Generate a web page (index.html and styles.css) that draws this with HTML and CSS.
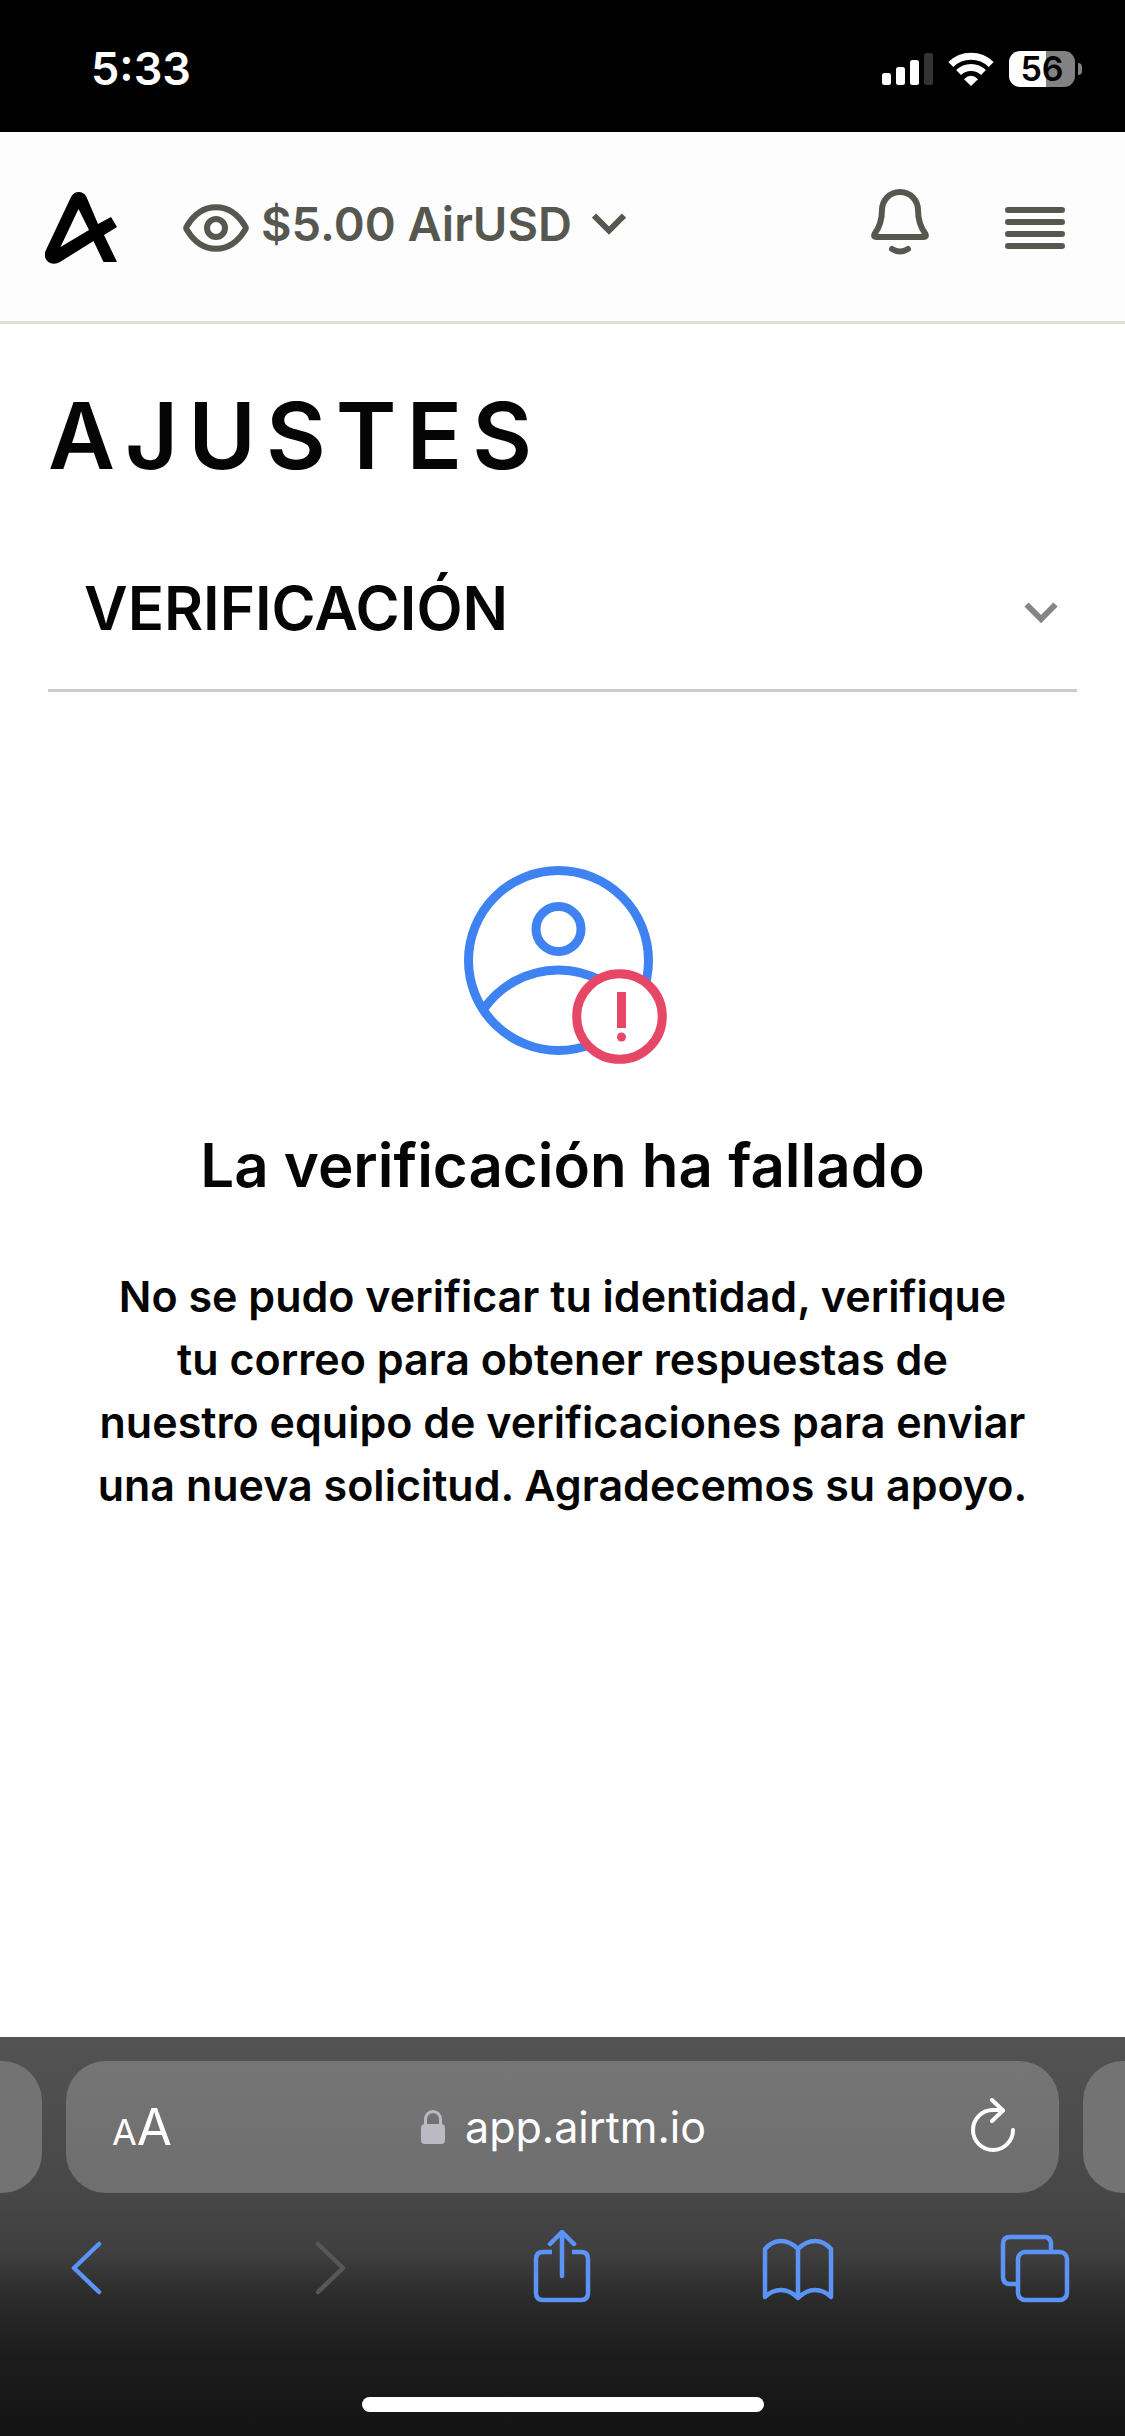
FILE: index.html
```html
<!doctype html>
<html lang="es">
<head>
	<meta charset="UTF-8">
	<meta name="viewport" content="width=device-width, initial-scale=1">
	<title>Ajustes</title>
	<link rel="stylesheet" href="styles.css">
</head>
<body>
<div class="status">
	<span class="time">5:33</span>
	<div class="status_icons">
		<svg class="signal" width="51" height="32" viewBox="0 0 51 32">
			<rect x="0" y="20" width="9" height="12" rx="2.5"/>
			<rect x="14" y="14" width="9" height="18" rx="2.5"/>
			<rect x="28" y="7" width="9" height="25" rx="2.5"/>
			<rect class="off" x="42" y="0" width="9" height="32" rx="2.5"/>
		</svg>
		<svg width="46" height="34" viewBox="0 0 46 34">
			<g fill="none" stroke="#fff" stroke-width="7">
				<path d="M2.800 12.400A29 29 0 0 1 43.200 12.400"/>
				<path d="M10.500 20.500A18 18 0 0 1 35.500 20.500"/>
			</g>
			<path d="M23 34L16 27.200Q23 20.500 30 27.200Z" fill="#fff"/>
		</svg>
		<div class="battery"><span>56</span></div>
	</div>
</div>
<header class="header">
	<a class="logo" href="#" aria-label="Airtm">
		<svg width="72" height="72" viewBox="0 0 72 72">
			<path fill-rule="evenodd" d="M26 5Q29 0 33.500 0Q39 0 41.500 5L53 32L66 25L72 35L59 43L72 70H58.500L48.500 49L15 70Q10 73 5 71Q-2 67 0.500 59ZM33.500 17L15.500 55L44 38Z"/>
		</svg>
	</a>
	<button class="balance" type="button">
		<svg width="66" height="48" viewBox="0 0 66 48" fill="none" stroke="#56574f" stroke-width="6">
			<path d="M4 22C19-3 47-3 62 22Q63.500 24 62 26C47 51 19 51 4 26Q2.500 24 4 22Z"/>
			<circle cx="33" cy="24" r="9"/>
		</svg>
		<span>$5.00 AirUSD</span>
		<svg class="caret" width="34" height="22" viewBox="0 0 34 22" fill="none" stroke="#56574f" stroke-width="6"><path d="M2 2.500L17 17.500L32 2.500"/></svg>
	</button>
	<button class="bell" type="button" aria-label="Notificaciones">
		<svg width="60" height="68" viewBox="0 0 60 68" fill="none" stroke="#56574f" stroke-width="6" stroke-linecap="round" stroke-linejoin="round">
			<path d="M30 4C19 4 12 13 12 22C12 33 9 40 4.500 46Q3 49 6 49H54Q57 49 55.500 46C51 40 48 33 48 22C48 13 41 4 30 4Z"/>
			<path d="M22 61Q30 66 38 61"/>
		</svg>
	</button>
	<button class="menu" type="button" aria-label="Menú">
		<svg width="60" height="42" viewBox="0 0 60 42" stroke="#56574f" stroke-width="6" stroke-linecap="round">
			<path d="M3 3H57M3 15H57M3 27H57M3 39H57"/>
		</svg>
	</button>
</header>
<main class="content">
	<h1>AJUSTES</h1>
	<button class="section" type="button">
		<span>VERIFICACIÓN</span>
		<svg width="34" height="32" viewBox="0 -10 34 32" fill="none" stroke="#858585" stroke-width="6"><path d="M2.500 2.500L17 17L31.500 2.500"/></svg>
	</button>
	<section class="result">
		<svg class="failed" width="210" height="198" viewBox="-6 0 210 198" fill="none" stroke-width="9">
			<g stroke="#3f83f2">
				<circle cx="94.500" cy="94.500" r="90"/>
				<circle cx="94.500" cy="63" r="22.500"/>
				<path d="M20.500 142A91 91 0 0 1 168.500 142"/>
			</g>
			<circle cx="155.500" cy="150.500" r="42.800" fill="#fff" stroke="#e64767"/>
			<path d="M157.500 126V162" stroke="#e64767"/>
			<circle cx="157.500" cy="171" r="4.500" fill="#e64767" stroke="none"/>
		</svg>
		<h2>La verificación ha fallado</h2>
		<p>No se pudo verificar tu identidad, verifique tu correo para obtener respuestas de nuestro equipo de verificaciones para enviar una nueva solicitud. Agradecemos su apoyo.</p>
	</section>
</main>
<footer class="browser">
	<div class="tabs">
		<div class="tab"></div>
		<div class="address">
			<button class="size" type="button" aria-label="Tamaño del texto"><small>A</small>A</button>
			<a class="url" href="#">
				<svg width="24" height="34" viewBox="0 0 24 34"><rect y="14" width="24" height="20" rx="4" fill="#bbbac2"/><path d="M4.500 15V9.500A7.500 8 0 0 1 19.500 9.500V15" fill="none" stroke="#bbbac2" stroke-width="3"/></svg>
				<span>app.airtm.io</span>
			</a>
			<button class="reload" type="button" aria-label="Recargar">
				<svg width="44" height="54" viewBox="0 0 44 54" fill="none" stroke="#fff" stroke-width="4" stroke-linecap="round" stroke-linejoin="round">
					<path d="M42 32A20 20 0 1 1 22 12H31"/>
					<path d="M21 2L32 12.500L21 23"/>
				</svg>
			</button>
		</div>
		<div class="tab"></div>
	</div>
	<nav class="nav">
		<button type="button" aria-label="Atrás"><svg width="100" height="76" viewBox="0 0 100 76"><path d="M62 14L37 38L62 62"/></svg></button>
		<button type="button" aria-label="Adelante" disabled><svg width="100" height="76" viewBox="0 0 100 76"><path d="M44 14L69 38L44 62"/></svg></button>
		<button type="button" aria-label="Compartir"><svg width="100" height="76" viewBox="0 0 100 76">
			<path d="M51 46V4M39 14L51 2L63 14"/>
			<path stroke-linecap="butt" d="M41 22H32Q25 22 25 29V63Q25 70 32 70H70Q77 70 77 63V29Q77 22 70 22H61"/>
		</svg></button>
		<button type="button" aria-label="Marcadores"><svg width="100" height="76" viewBox="0 0 100 76">
			<path d="M50 19Q42 11 33 11Q24 11 17 19V67Q24 60 33 60Q42 60 50 68Q58 60 67 60Q76 60 83 67V19Q76 11 67 11Q58 11 50 19V68"/>
		</svg></button>
		<button type="button" aria-label="Pestañas"><svg width="100" height="76" viewBox="0 0 100 76">
			<path stroke-linecap="butt" d="M33 54H25Q18 54 18 47V14Q18 7 25 7H59Q66 7 66 14V22"/>
			<rect x="33" y="22" width="49" height="48" rx="7"/>
		</svg></button>
	</nav>
	<div class="home"></div>
</footer>
</body>
</html>
```
FILE: styles.css
```css
*{box-sizing: border-box;}
body{display: flex;flex-direction: column;min-height: 100vh;margin: 0;background: #fff;color: #050505;font-family: "Inter", "Liberation Sans", sans-serif;font-weight: 600;}
button{margin: 0;padding: 0;border: 0;background: none;color: inherit;font: inherit;}
a{color: inherit;text-decoration: none;}
svg{display: block;flex: none;}
h1,h2,p{margin: 0;}

/*status bar*/
.status{display: flex;justify-content: space-between;align-items: center;height: 132px;padding: 6px 43px 0 91px;background: #000;color: #fff;}
.time{font-size: 45px;line-height: 52px;}
.status_icons{display: flex;align-items: center;gap: 15px;}
.signal{fill: #fff;}
.signal .off{fill: #333;}
.battery{position: relative;width: 66px;height: 36px;margin-right: 7px;border-radius: 11px;background: linear-gradient(90deg,#fff 56%,#828282 56%);color: #000;font-size: 34px;line-height: 36px;text-align: center;}
.battery:after{content: "";position: absolute;top: 12px;right: -7px;width: 4px;height: 12px;border-radius: 0 4px 4px 0;background: #828282;}

/*header*/
.header{display: flex;align-items: center;height: 192px;padding: 2px 60px 0 45px;border-bottom: 3px solid #dfe0d6;background: #fdfdfd;color: #56574f;}
.balance{display: flex;align-items: center;gap: 12px;margin-left: 66px;font-size: 47px;line-height: 52px;}
.balance span,.caret{margin-bottom: 8px;}
.caret{margin-left: 8px;}
.bell{margin-left: auto;padding-bottom: 12px;}
.menu{margin-left: 75px;}

/*settings*/
.content{flex: 1;padding: 72px 48px;}
h1{font-size: 92px;line-height: 80px;letter-spacing: 10px;font-weight: 600;}
.section{display: flex;justify-content: space-between;align-items: center;width: 100%;margin-top: 50px;padding: 44px 19px 43px 36px;border-bottom: 3px solid #ccc;font-size: 60px;line-height: 76px;}
.result{padding: 174px 48px 0;text-align: center;}
.failed{margin: 0 auto;}
h2{margin-top: 68px;font-size: 60px;line-height: 66px;font-weight: 600;}
p{margin-top: 67px;font-size: 43px;line-height: 63px;}

/*browser bar*/
.browser{padding: 24px 0;background: linear-gradient(#535353,#474748 40%,#3f3f3f 54%,#2a2a2a 66%,#1c1c1c 80%,#131313);}
.tabs{display: flex;gap: 24px;}
.tab{width: 42px;height: 132px;border-radius: 0 40px 40px 0;background: #737373;}
.tab:last-child{border-radius: 40px 0 0 40px;}
.address{display: grid;flex: 1;grid-template-columns: 1fr auto 1fr;align-items: center;height: 132px;padding: 0 44px 0 46px;border-radius: 40px;background: linear-gradient(#757575,#6e6e6f);color: #fff;font-weight: 400;}
.size{justify-self: start;padding-top: 4px;font-size: 51px;line-height: 60px;}
.size small{font-size: 36px;}
.url{display: flex;align-items: center;gap: 20px;font-size: 43px;line-height: 60px;}
.reload{justify-self: end;padding-bottom: 4px;}
.nav{display: flex;justify-content: space-between;margin-top: 37px;padding: 0 40px 0 37px;}
.nav svg{fill: none;stroke: #5b93f7;stroke-width: 4.500;stroke-linecap: round;stroke-linejoin: round;}
.nav button:disabled svg{stroke: #575757;}
.home{width: 402px;height: 15px;margin: 91px auto 0;border-radius: 8px;background: #fff;}
```
